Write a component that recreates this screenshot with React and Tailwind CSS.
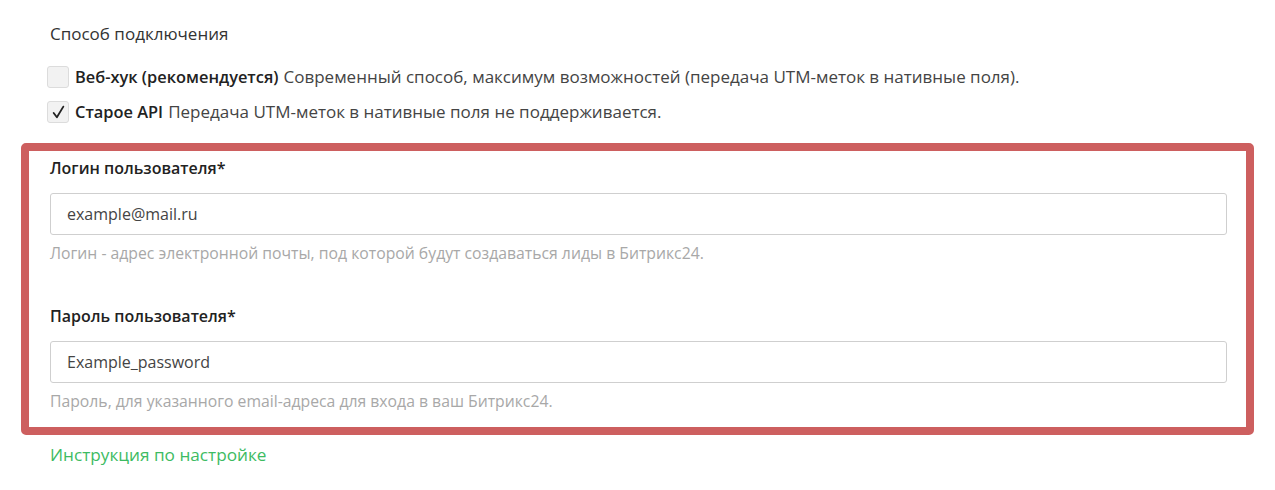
const Check = ({ checked }) => (
  <span className="mr-[6px] flex h-[22px] w-[22px] shrink-0 items-center justify-center rounded-[3px] border border-[#dcdcdc] bg-[#f2f2f2]">
    {checked && (
      <svg width="15" height="15" viewBox="0 0 14 14" fill="none">
        <path d="M2.5 7.5 L5.5 11.5 L11.5 1.5" stroke="#222" strokeWidth="1.7" strokeLinecap="round" strokeLinejoin="round" />
      </svg>
    )}
  </span>
);

const Field = ({ label, value, hint }) => (
  <div>
    <div className="text-[16px] font-semibold text-[#222] leading-[22px]">{label}</div>
    <div className="mt-[14px] flex h-[42px] items-center rounded-[3px] border border-[#cfcfcf] bg-white px-[16px] text-[16px] text-[#444]">
      {value}
    </div>
    <div className="mt-[8px] text-[15.75px] leading-[20px] text-[#a8a8a8]">{hint}</div>
  </div>
);

export default function App() {
  return (
    <div className="min-h-[490px] w-[1275px] bg-white font-['Open_Sans',sans-serif] text-[#333]">
      <div className="pt-[23px]">
        <div className="pl-[50px] text-[17px] leading-[22px] text-[#333]">Способ подключения</div>

        <div className="mt-[21px] flex flex-col gap-[13px] pl-[47px]">
          <label className="flex items-center leading-[22px]">
            <Check checked={false} />
            <span className="text-[16.4px] font-semibold text-[#222]">Веб-хук (рекомендуется)</span>
            <span className="ml-[5px] text-[17px] text-[#444]">
              Современный способ, максимум возможностей (передача UTM-меток в нативные поля).
            </span>
          </label>
          <label className="flex items-center leading-[22px]">
            <Check checked />
            <span className="text-[16.4px] font-semibold text-[#222]">Старое API</span>
            <span className="ml-[5px] text-[17px] text-[#444]">Передача UTM-меток в нативные поля не поддерживается.</span>
          </label>
        </div>

        <div className="ml-[21px] mt-[20px] w-[1233px] rounded-[5px] border-[8px] border-[#cd5f5f] pb-[16px] pl-[21px] pr-[19px] pt-[6px]">
          <Field
            label="Логин пользователя*"
            value="example@mail.ru"
            hint="Логин - адрес электронной почты, под которой будут создаваться лиды в Битрикс24."
          />
          <div className="mt-[42px]">
            <Field
              label="Пароль пользователя*"
              value="Example_password"
              hint="Пароль, для указанного email-адреса для входа в ваш Битрикс24."
            />
          </div>
        </div>

        <div className="mt-[9px] pl-[50px] text-[17.2px] leading-[22px] text-[#3dbb62]">Инструкция по настройке</div>
      </div>
    </div>
  );
}
